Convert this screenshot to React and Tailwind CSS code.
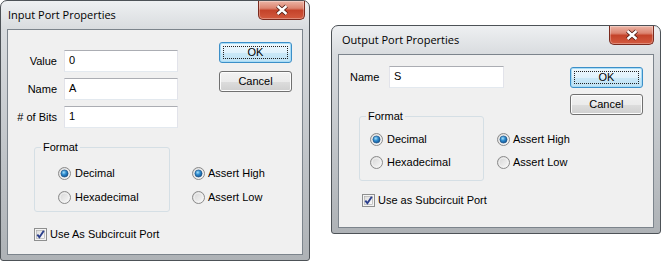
import React from "react";

const uiFont = { fontFamily: '"Liberation Sans", Arial, sans-serif' };
const titleFont = { fontFamily: '"Open Sans", "Noto Sans", sans-serif' };

function CloseButton({ className }) {
  return (
    <div
      className={`flex h-[19px] items-center justify-center rounded-b-[5px] border border-t-0 border-[#7a2a1e] bg-[linear-gradient(to_bottom,#ecb5a6_0%,#dc8470_40%,#c4432a_52%,#d35a3f_100%)] shadow-[inset_0_0_0_1px_rgba(255,255,255,0.3)] ${className}`}
    >
      <svg width="14" height="12" viewBox="0 0 14 12">
        <path d="M2.5 2 L11.5 10 M11.5 2 L2.5 10" stroke="#4b1a12" strokeWidth="4.2" />
        <path d="M2.5 2 L11.5 10 M11.5 2 L2.5 10" stroke="#ffffff" strokeWidth="2.4" />
      </svg>
    </div>
  );
}

function Dialog({ title, className, titleClass, closeClass, children }) {
  return (
    <div
      className={`flex shrink-0 flex-col rounded-t-[7px] rounded-b-[3px] border border-[#4d5257] bg-[linear-gradient(to_bottom,#eef0f2_0px,#d9dcdf_28px,#c0c4c8_60%,#aeb2b6_100%)] ${className}`}
    >
      <div className="flex h-[28px] items-start justify-between">
        <span className={`pt-[6px] text-[11px] leading-[15px] text-black ${titleClass}`} style={titleFont}>
          {title}
        </span>
        <CloseButton className={closeClass} />
      </div>
      <div
        className="mx-[6px] mb-[5px] flex-1 whitespace-nowrap border border-[#7c848c] bg-[#f0f0f0] text-[11px] leading-[13px] text-black"
        style={uiFont}
      >
        {children}
      </div>
    </div>
  );
}

function TextBox({ value, className }) {
  return (
    <div
      className={`h-[22px] border border-[#e2e3ea] border-t-[#abadb3] border-b-[#e3e9ef] bg-white px-[4px] pt-[3px] text-[11px] leading-[13px] ${className}`}
    >
      {value}
    </div>
  );
}

function Button({ children, primary }) {
  if (primary) {
    return (
      <div className="relative flex h-[21px] w-[73px] items-center justify-center rounded-[3px] border border-[#3c8fc8] bg-[linear-gradient(to_bottom,#eef8fd_0%,#e0f2fc_50%,#cbe9f8_51%,#bfe2f5_100%)] shadow-[inset_0_0_0_1px_#a8dcf6]">
        <span>{children}</span>
        <div className="absolute inset-[3px] border border-dotted border-[#222]" />
      </div>
    );
  }
  return (
    <div className="flex h-[21px] w-[73px] items-center justify-center rounded-[3px] border border-[#707070] bg-[linear-gradient(to_bottom,#f2f2f2_0%,#ebebeb_50%,#dddddd_51%,#cfcfcf_100%)] shadow-[inset_0_0_0_1px_#fcfcfc]">
      {children}
    </div>
  );
}

function RadioIcon({ checked }) {
  return (
    <svg width="13" height="13" viewBox="0 0 13 13" className="shrink-0">
      <defs>
        <linearGradient id="rb-bg" x1="0" y1="0" x2="1" y2="1">
          <stop offset="0" stopColor="#d2d2d2" />
          <stop offset="1" stopColor="#fbfbfb" />
        </linearGradient>
        <radialGradient id="rb-dot" cx="0.4" cy="0.35" r="0.7">
          <stop offset="0" stopColor="#a6e0fb" />
          <stop offset="0.45" stopColor="#2f8ccf" />
          <stop offset="1" stopColor="#0f4f8e" />
        </radialGradient>
      </defs>
      <circle cx="6.5" cy="6.5" r="6" fill="url(#rb-bg)" stroke="#8a8a8a" strokeWidth="1" />
      <circle cx="6.5" cy="6.5" r="4.4" fill="none" stroke="#f4f4f4" strokeWidth="0.8" />
      {checked && <circle cx="6.5" cy="6.5" r="3.6" fill="url(#rb-dot)" stroke="#1c4f80" strokeWidth="0.6" />}
    </svg>
  );
}

function Radio({ label, checked, gap }) {
  return (
    <div className={`flex h-[16px] items-center ${gap}`}>
      <RadioIcon checked={checked} />
      <span>{label}</span>
    </div>
  );
}

function CheckIcon() {
  return (
    <svg width="13" height="13" viewBox="0 0 13 13" className="shrink-0">
      <defs>
        <linearGradient id="cb-bg" x1="0" y1="0" x2="1" y2="1">
          <stop offset="0" stopColor="#dcdcdc" />
          <stop offset="1" stopColor="#fbfbfb" />
        </linearGradient>
      </defs>
      <rect x="0.5" y="0.5" width="12" height="12" fill="#f4f4f4" stroke="#8e8f8f" />
      <rect x="2.5" y="2.5" width="8" height="8" fill="url(#cb-bg)" stroke="#a6a6a6" strokeWidth="0.6" />
      <path d="M3.3 6.6 L5.4 9.2 L9.8 2.8" fill="none" stroke="#2b3f8c" strokeWidth="1.9" />
    </svg>
  );
}

function CheckRow({ label, className }) {
  return (
    <div className={`flex h-[13px] items-center gap-[3px] ${className}`}>
      <CheckIcon />
      <span>{label}</span>
    </div>
  );
}

function FormatGroup({ className, innerClass, gapClass }) {
  return (
    <fieldset className={`shrink-0 rounded-[3px] border border-[#d5dfe5] ${className}`}>
      <legend className="ml-[6px] px-[2px] leading-[13px]">Format</legend>
      <div className={`flex flex-col ${innerClass} ${gapClass}`}>
        <Radio label="Decimal" checked gap="gap-[4px]" />
        <Radio label="Hexadecimal" gap="gap-[4px]" />
      </div>
    </fieldset>
  );
}

function InputPortDialog() {
  return (
    <Dialog
      title="Input Port Properties"
      className="h-[261px] w-[310px]"
      titleClass="pl-[7px]"
      closeClass="mr-[4px] w-[47px]"
    >
      <div className="flex items-start">
        <div className="mt-[20px] grid grid-cols-[49px_114px] items-center gap-x-[7px] gap-y-[6px]">
          <span className="text-right">Value</span>
          <TextBox value="0" />
          <span className="text-right">Name</span>
          <TextBox value="A" />
          <span className="text-right"># of Bits</span>
          <TextBox value="1" />
        </div>
        <div className="ml-[41px] mt-[12px] flex flex-col gap-[8px]">
          <Button primary>OK</Button>
          <Button>Cancel</Button>
        </div>
      </div>
      <div className="ml-[26px] mt-[13px] flex items-start">
        <FormatGroup className="h-[71px] w-[136px] pb-[6px]" innerClass="pl-[23px] pt-[11px]" gapClass="gap-[8px]" />
        <div className="ml-[22px] mt-[24px] flex flex-col gap-[8px]">
          <Radio label="Assert High" checked gap="gap-[3px]" />
          <Radio label="Assert Low" gap="gap-[3px]" />
        </div>
      </div>
      <CheckRow label="Use As Subcircuit Port" className="ml-[26px] mt-[16px]" />
    </Dialog>
  );
}

function OutputPortDialog() {
  return (
    <Dialog
      title="Output Port Properties"
      className="mt-[25px] h-[209px] w-[330px]"
      titleClass="pl-[10px]"
      closeClass="mr-[6px] w-[45px]"
    >
      <div className="flex items-start">
        <div className="flex flex-col">
          <div className="ml-[11px] mt-[11px] flex items-center">
            <span className="w-[39px]">Name</span>
            <TextBox value="S" className="w-[115px]" />
          </div>
          <div className="ml-[20px] mt-[22px] flex items-start">
            <FormatGroup className="h-[71px] w-[125px] pb-[10px]" innerClass="pl-[10px] pt-[8px]" gapClass="gap-[7px]" />
            <div className="ml-[13px] mt-[21px] flex flex-col gap-[7px]">
              <Radio label="Assert High" checked gap="gap-[3px]" />
              <Radio label="Assert Low" gap="gap-[3px]" />
            </div>
          </div>
          <CheckRow label="Use as Subcircuit Port" className="ml-[23px] mt-[13px]" />
        </div>
        <div className="ml-auto mr-[13px] mt-[12px] flex flex-col gap-[6px]">
          <Button primary>OK</Button>
          <Button>Cancel</Button>
        </div>
      </div>
    </Dialog>
  );
}

export default function App() {
  return (
    <div className="flex h-[262px] w-[662px] items-start gap-[21px] overflow-hidden bg-white">
      <InputPortDialog />
      <OutputPortDialog />
    </div>
  );
}
